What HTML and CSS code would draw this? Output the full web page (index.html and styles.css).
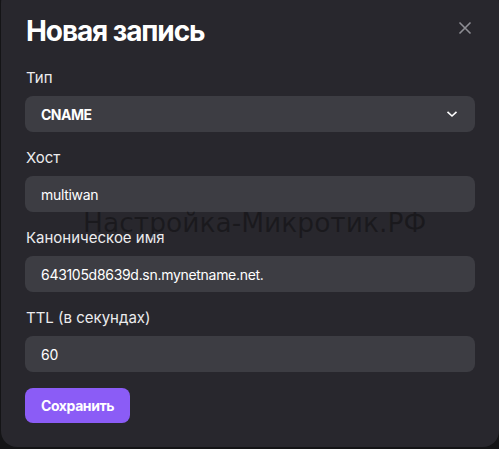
FILE: index.html
```html
<!DOCTYPE html>
<html lang="ru">
<head>
<meta charset="utf-8">
<title>Новая запись</title>
<link rel="stylesheet" href="styles.css">
</head>
<body>
<div class="dialog">
  <div class="header">
    <h1 class="title">Новая запись</h1>
    <button class="close" aria-label="Закрыть">
      <svg width="14" height="14" viewBox="0 0 14 14"><path d="M1.5 1.5 L12.5 12.5 M12.5 1.5 L1.5 12.5" stroke="#8e8e94" stroke-width="1.6" fill="none"/></svg>
    </button>
  </div>
  <div class="field">
    <div class="label">Тип</div>
    <div class="input select">
      <span class="value bold">CNAME</span>
      <svg class="chevron" width="12" height="8" viewBox="0 0 12 8"><path d="M1.5 1.8 L6 6 L10.5 1.8" stroke="#ffffff" stroke-width="1.6" fill="none"/></svg>
    </div>
  </div>
  <div class="field">
    <div class="label">Хост</div>
    <div class="input"><span class="value">multiwan</span></div>
  </div>
  <div class="field">
    <div class="label">Каноническое имя</div>
    <div class="input"><span class="value">643105d8639d.sn.mynetname.net.</span></div>
  </div>
  <div class="field">
    <div class="label">TTL (в секундах)</div>
    <div class="input"><span class="value">60</span></div>
  </div>
  <button class="save">Сохранить</button>
  <div class="watermark">Настройка-Микротик.РФ</div>
</div>
</body>
</html>
```
FILE: styles.css
```css
html, body {
  margin: 0;
  padding: 0;
  background: #141416;
  overflow: hidden;
}
body {
  font-family: Inter, "Noto Sans", sans-serif;
  color: #ffffff;
}
.dialog {
  position: relative;
  box-sizing: border-box;
  width: 498px;
  height: 460px;
  margin: -13px 0 0 1px;
  padding: 26px 24px 24px 24px;
  background: #28272d;
  border-radius: 16px;
  display: flex;
  flex-direction: column;
}
.header {
  display: flex;
  justify-content: space-between;
  align-items: flex-start;
  height: 36px;
  margin-bottom: 19px;
}
.title {
  margin: 0 0 0 1px;
  font-size: 28px;
  line-height: 36px;
  font-weight: 700;
  letter-spacing: -1.1px;
}
.close {
  background: none;
  border: 0;
  padding: 0;
  margin: 8px 3px 0 0;
  width: 14px;
  height: 14px;
  display: flex;
}
.field {
  display: flex;
  flex-direction: column;
  margin-bottom: 16px;
}
.label {
  font-size: 15px;
  line-height: 20px;
  color: #ececee;
  margin: 0 0 8px 1px;
}
.input {
  height: 36px;
  border-radius: 8px;
  background: #3d3d43;
  display: flex;
  align-items: center;
  justify-content: space-between;
  padding: 0 17px 0 16px;
  font-size: 14px;
  letter-spacing: -0.3px;
}
.value.bold {
  font-weight: 700;
  letter-spacing: -0.5px;
}
.chevron {
  display: block;
}
.save {
  align-self: flex-start;
  height: 35px;
  padding: 0 16px;
  border: 0;
  border-radius: 8px;
  background: #8b5cf6;
  color: #ffffff;
  font-family: Inter, "Noto Sans", sans-serif;
  font-size: 14px;
  font-weight: 700;
  letter-spacing: -0.4px;
}
.watermark {
  position: absolute;
  left: 82px;
  top: 227px;
  font-family: "DejaVu Sans", sans-serif;
  font-size: 26.5px;
  line-height: 18px;
  color: rgba(0, 0, 0, 0.34);
  white-space: nowrap;
  pointer-events: none;
}
```
